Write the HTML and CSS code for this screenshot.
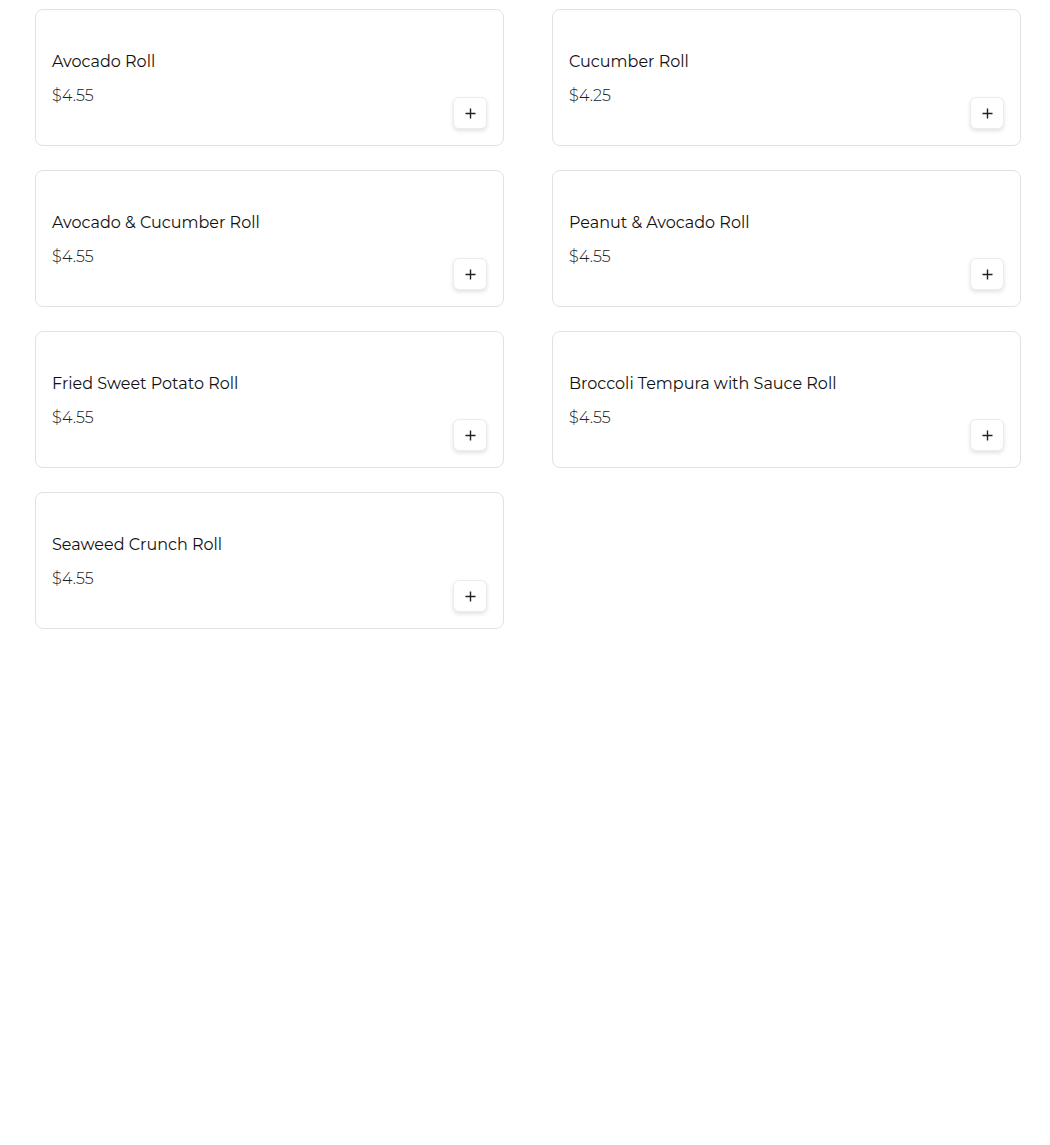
FILE: index.html
```html
<!DOCTYPE html>
<html>
<head>
<meta charset="utf-8">
<link rel="stylesheet" href="styles.css">
</head>
<body>
<div class="grid">
  <div class="card"><div class="info"><div class="name">Avocado Roll</div><div class="price">$4.55</div></div><button class="add"><svg width="11" height="11" viewBox="0 0 11 11"><path d="M5.5 0.5v10M0.5 5.5h10" stroke="#222" stroke-width="1.4" fill="none"/></svg></button></div>
  <div class="card"><div class="info"><div class="name">Cucumber Roll</div><div class="price">$4.25</div></div><button class="add"><svg width="11" height="11" viewBox="0 0 11 11"><path d="M5.5 0.5v10M0.5 5.5h10" stroke="#222" stroke-width="1.4" fill="none"/></svg></button></div>
  <div class="card"><div class="info"><div class="name">Avocado &amp; Cucumber Roll</div><div class="price">$4.55</div></div><button class="add"><svg width="11" height="11" viewBox="0 0 11 11"><path d="M5.5 0.5v10M0.5 5.5h10" stroke="#222" stroke-width="1.4" fill="none"/></svg></button></div>
  <div class="card"><div class="info"><div class="name">Peanut &amp; Avocado Roll</div><div class="price">$4.55</div></div><button class="add"><svg width="11" height="11" viewBox="0 0 11 11"><path d="M5.5 0.5v10M0.5 5.5h10" stroke="#222" stroke-width="1.4" fill="none"/></svg></button></div>
  <div class="card"><div class="info"><div class="name">Fried Sweet Potato Roll</div><div class="price">$4.55</div></div><button class="add"><svg width="11" height="11" viewBox="0 0 11 11"><path d="M5.5 0.5v10M0.5 5.5h10" stroke="#222" stroke-width="1.4" fill="none"/></svg></button></div>
  <div class="card"><div class="info"><div class="name">Broccoli Tempura with Sauce Roll</div><div class="price">$4.55</div></div><button class="add"><svg width="11" height="11" viewBox="0 0 11 11"><path d="M5.5 0.5v10M0.5 5.5h10" stroke="#222" stroke-width="1.4" fill="none"/></svg></button></div>
  <div class="card"><div class="info"><div class="name">Seaweed Crunch Roll</div><div class="price">$4.55</div></div><button class="add"><svg width="11" height="11" viewBox="0 0 11 11"><path d="M5.5 0.5v10M0.5 5.5h10" stroke="#222" stroke-width="1.4" fill="none"/></svg></button></div>
</div>
</body>
</html>
```

FILE: styles.css
```css
html, body {
  margin: 0;
  background: #fff;
}
body {
  font-family: Montserrat, "DejaVu Sans", sans-serif;
  color: #111;
}
.grid {
  display: grid;
  grid-template-columns: 469px 469px;
  column-gap: 48px;
  row-gap: 24px;
  padding: 9px 0 0 35px;
}
.card {
  box-sizing: border-box;
  height: 137px;
  border: 1px solid #e2e2e2;
  border-radius: 8px;
  padding: 41px 16px 16px 16px;
  display: flex;
  justify-content: space-between;
  align-items: flex-end;
}
.info {
  align-self: flex-start;
}
.name {
  font-size: 16px;
  line-height: 22px;
  font-weight: 400;
  color: #111;
}
.price {
  margin-top: 12px;
  font-size: 16px;
  line-height: 22px;
  font-weight: 300;
  color: #222;
}
.add {
  width: 34px;
  height: 32px;
  border: 1px solid #ececec;
  border-radius: 6px;
  background: #fff;
  box-shadow: 0 2px 4px rgba(0,0,0,0.12);
  display: flex;
  align-items: center;
  justify-content: center;
  padding: 0;
}
```
